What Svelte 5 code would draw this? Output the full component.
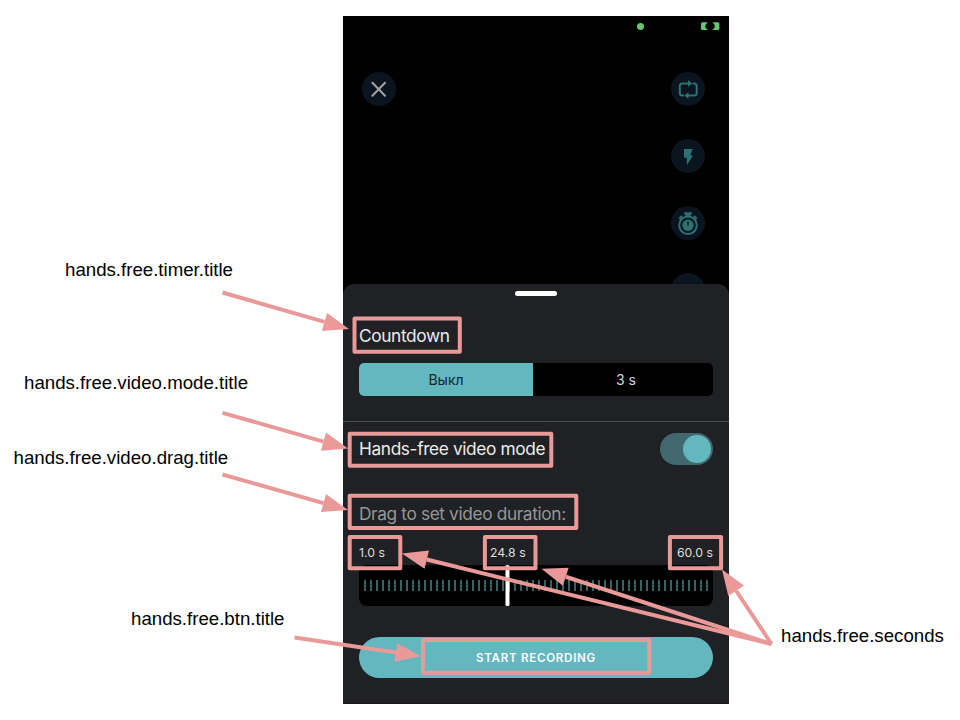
<script>
  const ticks = Array.from({ length: 58 }, (_, i) => 6 + i * 6);

  const labels = [
    { text: 'hands.free.timer.title', x: 65, y: 259 },
    { text: 'hands.free.video.mode.title', x: 24, y: 372 },
    { text: 'hands.free.video.drag.title', x: 13.5, y: 447 },
    { text: 'hands.free.btn.title', x: 131, y: 608 },
    { text: 'hands.free.seconds', x: 781, y: 625 }
  ];

  const frames = [
    { x: 354.5, y: 318.5, w: 105.3, h: 33.3 },
    { x: 349.7, y: 433.7, w: 201.6, h: 32 },
    { x: 349.7, y: 495.7, w: 226.6, h: 32.3 },
    { x: 349.7, y: 536.9, w: 50.6, h: 31.4 },
    { x: 484.9, y: 536.9, w: 50.6, h: 31.4 },
    { x: 669.9, y: 536.9, w: 51.2, h: 31.4 },
    { x: 422.9, y: 639.9, w: 226.4, h: 32.8 }
  ];

  const arrows = [
    [222.5, 292.5, 349, 329],
    [222.5, 412.8, 348, 448.6],
    [222.5, 474.5, 348, 510],
    [294.5, 637.5, 421, 656.3],
    [771.5, 644, 402, 553.5],
    [771.5, 644, 541.5, 568.8],
    [771.5, 644, 722, 569.5]
  ].map(([x1, y1, x2, y2]) => {
    const length = Math.hypot(x2 - x1, y2 - y1);
    const ux = (x2 - x1) / length;
    const uy = (y2 - y1) / length;
    const bx = x2 - ux * 25.5;
    const by = y2 - uy * 25.5;
    return {
      x1, y1, bx, by,
      head: `${x2},${y2} ${bx - uy * 9.4},${by + ux * 9.4} ${bx + uy * 9.4},${by - ux * 9.4}`
    };
  });
</script>

<main class="page">
  <section class="phone">
    <div class="camera">
      <div class="status">
        <span class="dot"></span>
        <svg class="battery" width="20" height="9" viewBox="0 0 20 9" fill="#67c673">
          <path d="M2.4 .3h5.2Q5.2 3.3 5.2 4.6T7.8 8H2.4Q1 8 1 6.5V1.8Q1 .3 2.4 .3Z" />
          <path d="M12.7 .3h4.7q2 0 2 1.4v5q0 1.3-2 1.3h-5.3q2.7-2 2.7-3.6T12.7 .3Z" />
        </svg>
      </div>
      <div class="controls">
        <div class="round">
          <svg width="34" height="34" viewBox="0 0 34 34" fill="none" stroke="#a3a3a3" stroke-width="2" stroke-linecap="round">
            <path d="M10.4 10.7l12.6 13M23 10.7l-12.6 13" />
          </svg>
        </div>
        <div class="tools">
          <div class="round">
            <svg width="34" height="34" viewBox="0 0 34 34" fill="none" stroke="#2d7172" stroke-width="2">
              <path d="M13 23.6h-1.7q-2.5 0-2.5-2.5v-7.2q0-2.5 2.5-2.5H18M21.5 11.4h1.7q2.5 0 2.5 2.5v7.2q0 2.5-2.5 2.5H16.5" />
              <path d="M17 8v6.8l4.2-3.4zM17.5 20.2V27l-4.2-3.4z" fill="#2d7172" stroke="none" />
            </svg>
          </div>
          <div class="round">
            <svg width="34" height="34" viewBox="0 0 34 34" fill="#2d7172">
              <path d="M13 10h8.6l-2.3 6.4h2.6L15.8 26.3v-7.6H13Z" />
            </svg>
          </div>
          <div class="round">
            <svg width="34" height="34" viewBox="0 0 34 34" fill="none" stroke="#2d7172" stroke-width="2">
              <circle cx="17" cy="19.2" r="8.8" />
              <circle cx="17" cy="19.2" r="5.7" fill="#2d7172" stroke="none" />
              <path d="M17 19.5v-4" stroke="#0b1520" stroke-width="1.5" />
              <path d="M13.2 6.2h7.6v2.2l-2 1.3v2h-3.6v-2l-2-1.3Z" fill="#2d7172" stroke="none" />
              <path d="M8.2 12.8l3-2.6M25.8 12.8l-3-2.6" stroke-width="2.4" />
            </svg>
          </div>
          <div class="round"></div>
        </div>
      </div>
    </div>

    <div class="sheet">
      <div class="handle"></div>
      <h2 class="title countdown"><span>Countdown</span></h2>
      <div class="segments">
        <div class="segment active">Выкл</div>
        <div class="segment">3 s</div>
      </div>
      <div class="divider"></div>
      <div class="mode">
        <h2 class="title handsfree">Hands-free video mode</h2>
        <div class="toggle"><span class="knob"></span></div>
      </div>
      <p class="title drag">Drag to set video duration:</p>
      <div class="times">
        <span>1.0 s</span><span class="current">24.8 s</span><span>60.0 s</span>
      </div>
      <div class="slider">
        <svg width="354" height="41" viewBox="0 0 354 41">
          {#each ticks as x}
            <line x1={x} y1="15" x2={x} y2="26" stroke="#437b7f" stroke-width="1.6" />
          {/each}
          <rect x="146.5" y="0" width="4" height="41" rx="1.6" fill="#fff" />
        </svg>
      </div>
      <button class="start">START RECORDING</button>
    </div>
  </section>

  {#each labels as label}
    <span class="label" style="left:{label.x}px;top:{label.y}px">{label.text}</span>
  {/each}

  <svg class="annotations" width="960" height="720" viewBox="0 0 960 720">
    {#each frames as f}
      <rect x={f.x} y={f.y} width={f.w} height={f.h} fill="none" stroke="#ea9999" stroke-width="4" stroke-linejoin="round" />
    {/each}
    {#each arrows as a}
      <line x1={a.x1} y1={a.y1} x2={a.bx} y2={a.by} stroke="#ea9999" stroke-width="4" />
      <polygon points={a.head} fill="#ea9999" />
    {/each}
  </svg>
</main>

<style>
  .page {
    position: relative;
    box-sizing: border-box;
    width: 960px;
    height: 720px;
    padding: 16px 0 0 343px;
    background: #fff;
    overflow: hidden;
    font-family: Inter, Roboto, sans-serif;
  }
  .phone {
    width: 386px;
    height: 688px;
    background: #010101;
    overflow: hidden;
  }
  .camera {
    height: 268px;
    overflow: hidden;
  }
  .status {
    display: flex;
    justify-content: flex-end;
    align-items: center;
    height: 21px;
    gap: 56px;
    padding-right: 9px;
  }
  .dot {
    width: 7px;
    height: 7px;
    border-radius: 50%;
    background: #67c673;
  }
  .controls {
    display: flex;
    justify-content: space-between;
    padding: 35px 24px 0 19px;
  }
  .tools {
    display: flex;
    flex-direction: column;
    gap: 33px;
  }
  .round {
    width: 34px;
    height: 34px;
    border-radius: 50%;
    background: #0b1520;
  }
  .round svg { display: block; }
  .sheet {
    box-sizing: border-box;
    display: flex;
    flex-direction: column;
    height: 420px;
    padding: 7px 16px 0;
    background: #202124;
    border-radius: 11px 11px 0 0;
    border-bottom: 1px solid #171316;
  }
  .handle {
    align-self: center;
    width: 42px;
    height: 5px;
    border-radius: 3px;
    background: #fff;
  }
  .title {
    margin: 0;
    font-size: 17.3px;
    line-height: 24px;
    font-weight: 400;
    letter-spacing: -0.37px;
    color: #ececec;
    white-space: nowrap;
  }
  .countdown { margin-top: 28px; }
  .segments {
    display: flex;
    height: 33px;
    margin-top: 15px;
    border-radius: 5px;
    background: #000;
    overflow: hidden;
  }
  .segment {
    display: flex;
    flex: none;
    align-items: center;
    justify-content: center;
    box-sizing: border-box;
    width: 180px;
    padding-left: 6px;
    font-size: 14px;
    color: #d4d4d4;
  }
  .active {
    width: 174px;
    padding: 0;
    background: #63b7bf;
    color: #14282b;
  }
  .divider {
    height: 1px;
    margin: 25px -16px 0;
    background: #4d4e50;
  }
  .mode {
    display: flex;
    align-items: center;
    justify-content: space-between;
    height: 32px;
    margin-top: 11px;
  }
  .toggle {
    display: flex;
    align-items: center;
    justify-content: flex-end;
    box-sizing: border-box;
    width: 53px;
    height: 32px;
    padding-right: 2px;
    border-radius: 16px;
    background: #41686d;
  }
  .knob {
    width: 28px;
    height: 28px;
    border-radius: 50%;
    background: #63b7bf;
  }
  .drag {
    margin-top: 37px;
    color: #96979a;
  }
  .times {
    display: grid;
    grid-template-columns: 131px 1fr auto;
    height: 16px;
    margin-top: 19px;
    line-height: 16px;
    font-size: 12.3px;
    color: #dedede;
  }
  .slider {
    height: 41px;
    margin-top: 4px;
    border-radius: 8px;
    background: #000;
    overflow: hidden;
  }
  .slider svg { display: block; }
  .start {
    height: 41px;
    margin-top: 31px;
    padding: 1px 0 0;
    border: 0;
    border-radius: 21px;
    background: #63b7bf;
    color: #fafafa;
    font: 600 11.6px/40px Inter, Roboto, sans-serif;
    letter-spacing: 0.7px;
  }
  .label {
    position: absolute;
    font-family: "Liberation Sans", Arial, sans-serif;
    font-size: 18.67px;
    line-height: 21px;
    color: #000;
    white-space: nowrap;
  }
  .annotations {
    position: absolute;
    left: 0;
    top: 0;
  }
</style>
